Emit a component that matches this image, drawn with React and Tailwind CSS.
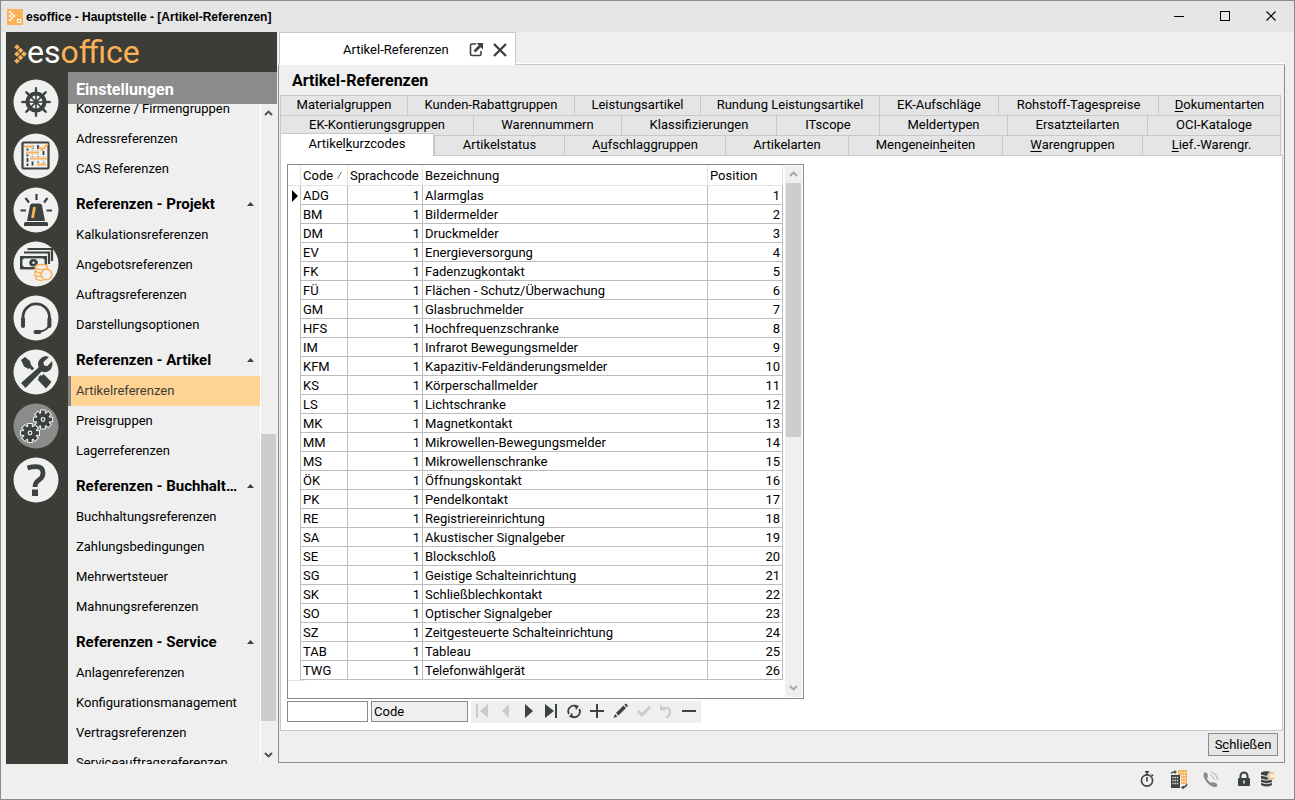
import React from "react";

const INK = "#3b4240";
const ORANGE = "#fbb256";

const sections = [
  { items: ["Konzerne / Firmengruppen", "Adressreferenzen", "CAS Referenzen"] },
  {
    title: "Referenzen - Projekt",
    items: ["Kalkulationsreferenzen", "Angebotsreferenzen", "Auftragsreferenzen", "Darstellungsoptionen"],
  },
  { title: "Referenzen - Artikel", items: ["Artikelreferenzen", "Preisgruppen", "Lagerreferenzen"] },
  {
    title: "Referenzen - Buchhaltung",
    items: ["Buchhaltungsreferenzen", "Zahlungsbedingungen", "Mehrwertsteuer", "Mahnungsreferenzen"],
  },
  {
    title: "Referenzen - Service",
    items: ["Anlagenreferenzen", "Konfigurationsmanagement", "Vertragsreferenzen", "Serviceauftragsreferenzen"],
  },
];

const rows = [
  ["ADG", "Alarmglas"],
  ["BM", "Bildermelder"],
  ["DM", "Druckmelder"],
  ["EV", "Energieversorgung"],
  ["FK", "Fadenzugkontakt"],
  ["FÜ", "Flächen - Schutz/Überwachung"],
  ["GM", "Glasbruchmelder"],
  ["HFS", "Hochfrequenzschranke"],
  ["IM", "Infrarot Bewegungsmelder"],
  ["KFM", "Kapazitiv-Feldänderungsmelder"],
  ["KS", "Körperschallmelder"],
  ["LS", "Lichtschranke"],
  ["MK", "Magnetkontakt"],
  ["MM", "Mikrowellen-Bewegungsmelder"],
  ["MS", "Mikrowellenschranke"],
  ["ÖK", "Öffnungskontakt"],
  ["PK", "Pendelkontakt"],
  ["RE", "Registriereinrichtung"],
  ["SA", "Akustischer Signalgeber"],
  ["SE", "Blockschloß"],
  ["SG", "Geistige Schalteinrichtung"],
  ["SK", "Schließblechkontakt"],
  ["SO", "Optischer Signalgeber"],
  ["SZ", "Zeitgesteuerte Schalteinrichtung"],
  ["TAB", "Tableau"],
  ["TWG", "Telefonwählgerät"],
];

const tabRows = [
  {
    grid: "grid-cols-[127fr_167fr_126fr_179fr_119fr_160fr_122fr]",
    tabs: ["Materialgruppen", "Kunden-Rabattgruppen", "Leistungsartikel", "Rundung Leistungsartikel", "EK-Aufschläge", "Rohstoff-Tagespreise", "_Dokumentarten"],
  },
  {
    grid: "grid-cols-[193fr_148fr_155fr_103fr_128fr_140fr_133fr]",
    tabs: ["EK-Kontierungsgruppen", "Warennummern", "Klassifizierungen", "ITscope", "Meldertypen", "Ersatzteilarten", "OCI-Kataloge"],
  },
  {
    grid: "grid-cols-[154fr_130fr_161fr_123fr_154fr_140fr_138fr]",
    tabs: ["Artikel_kurzcodes", "Artikelstatus", "A_ufschlaggruppen", "Artikelarten", "Mengenein_heiten", "_Warengruppen", "_Lief.-Warengr."],
  },
];

function Mnemonic({ text }) {
  const i = text.indexOf("_");
  if (i < 0) return text;
  return (
    <>
      {text.slice(0, i)}
      <span className="underline underline-offset-2">{text[i + 1]}</span>
      {text.slice(i + 2)}
    </>
  );
}

function Chevron({ up, className }) {
  return (
    <svg width="9" height="6" viewBox="0 0 9 6" className={className} aria-hidden="true">
      <path d={up ? "M1 5L4.500 1.500L8 5" : "M1 1L4.500 4.500L8 1"} fill="none" stroke="currentColor" strokeWidth="1.900" />
    </svg>
  );
}

/* ---------- module rail drawings, 46x46 ---------- */

function HelmIcon() {
  const angles = [0, 45, 90, 135, 180, 225, 270, 315];
  return (
    <g stroke={INK} fill="none">
      <circle cx="23" cy="23" r="8.500" strokeWidth="4" />
      {angles.map((a) => (
        <g key={a} transform={`rotate(${a} 23 23)`}>
          <path d="M23 21V8" strokeWidth="1.600" />
          <path d="M23 13V9.500" strokeWidth="2.400" />
        </g>
      ))}
      <circle cx="23" cy="23" r="2" fill={INK} />
    </g>
  );
}

function PlanIcon() {
  return (
    <g fill="none">
      <rect x="9.500" y="9.500" width="26" height="26" rx="1" stroke={INK} strokeWidth="2.200" />
      <path d="M14.500 14V33M19.500 12V33M25 12V33M30.500 18V33" stroke={INK} strokeWidth="1.800" strokeDasharray="4 1.500" />
      <path d="M11 13.500H20M14 19.500H26M17 25.500H34M24 31.500H33" stroke="#f0f0f0" strokeWidth="4" />
      <path d="M11 13.500H20M14 19.500H26M17 25.500H34M24 31.500H33" stroke={ORANGE} strokeWidth="2.200" />
      <path d="M26 14L29 17L35 11" stroke={ORANGE} strokeWidth="2" />
    </g>
  );
}

function AlarmIcon() {
  return (
    <g>
      <path d="M14 34L17 18.500Q17.500 16.500 19.500 16.500H26.500Q28.500 16.500 29 18.500L32 34Z" fill={INK} />
      <path d="M11 39V36.500Q11 35 12.500 35H33.500Q35 35 35 36.500V39Z" fill={INK} />
      <path d="M21.500 20L19.500 31" stroke={ORANGE} strokeWidth="2.800" />
      <path d="M23.500 7V13M12.500 11L16 15.500M34.500 11L31 15.500M7.500 23.500H13M33.500 23.500H39" stroke={INK} strokeWidth="2.200" />
    </g>
  );
}

function MoneyIcon() {
  return (
    <g fill="none">
      <path d="M14.500 8H39V20M11 11.500H36V23" stroke={INK} strokeWidth="2.200" />
      <rect x="8.200" y="16.200" width="24.600" height="11" fill="#f0f0f0" stroke={INK} strokeWidth="2.400" />
      <path d="M8 16H12L8 19ZM33 16H29L33 19ZM8 27H12L8 24ZM33 27H29L33 24Z" fill={INK} stroke={INK} />
      <ellipse cx="20.500" cy="21.700" rx="4.300" ry="3.800" fill={INK} />
      <circle cx="20.500" cy="21.700" r="1.200" fill="#f0f0f0" />
      <path d="M22 25Q28 21 36 26V39Q28 43 22 38L21 33Z" fill="#f0f0f0" />
      <ellipse cx="28.500" cy="26" rx="6" ry="2.500" stroke={ORANGE} strokeWidth="1.500" />
      <path d="M22.500 27V30Q25 32.500 29 32M22 30.500V34Q25 36 28 35.500M23 34.500V38Q26 40 30 39.500M34.500 27V29" stroke={ORANGE} strokeWidth="1.500" />
      <circle cx="33.500" cy="33.500" r="5.300" fill="#f0f0f0" stroke={ORANGE} strokeWidth="1.600" />
    </g>
  );
}

function HeadsetIcon() {
  return (
    <g fill="none" stroke={INK}>
      <path d="M10 25V22A13.200 13.200 0 0 1 36.400 22V25" strokeWidth="2.800" />
      <path d="M10 24V31M36.400 24V31" strokeWidth="4" strokeLinecap="round" />
      <path d="M36.500 29Q34.500 36 26 36.500" strokeWidth="1.800" />
      <path d="M22.500 37H26.500" strokeWidth="4" strokeLinecap="round" />
    </g>
  );
}

function ToolsIcon() {
  return (
    <g>
      <path d="M13 13L33 34" stroke={INK} strokeWidth="3" />
      <path d="M8 11L12 8L17 12L18.500 17.500L15.500 20L11 17.500Z" fill={INK} />
      <path d="M24.500 30.500L30.500 25L38.500 33L33 39.500Z" fill={INK} />
      <path d="M11.500 35.500L30 17" stroke="#f0f0f0" strokeWidth="9" />
      <path d="M8 34L25.500 18.500Q23.500 12 29 8.500Q32.500 6.500 36 8L30.500 13L31 16.500L34.500 17L39 12Q40.500 18 36.500 21.500Q33 24.500 28.500 22.500L12.500 39Z" fill={INK} />
    </g>
  );
}

function GearShape({ cx, cy, r }) {
  return (
    <g transform={`translate(${cx} ${cy})`}>
      {[false, true].map((front) => (
        <g key={String(front)} fill={front ? INK : "#f0f0f0"} stroke={front ? "none" : "#f0f0f0"} strokeWidth="2">
          <circle r={r} />
          {[0, 45, 90, 135, 180, 225, 270, 315].map((a) => (
            <rect key={a} x="-1.800" y={-r - 2.500} width="3.600" height="4" transform={`rotate(${a})`} />
          ))}
        </g>
      ))}
      <circle r="1.800" fill={INK} stroke="#f0f0f0" strokeWidth="1.200" />
    </g>
  );
}

function GearsIcon() {
  return (
    <g>
      <GearShape cx={30} cy={16.500} r={6.500} />
      <GearShape cx={17} cy={30} r={6.500} />
    </g>
  );
}

function HelpIcon() {
  return (
    <g>
      <path d="M14.500 11Q19 9.700 23 9.700Q30 9.700 30 16Q30 20 26.500 22.500Q22 25.500 22 30" fill="none" stroke={INK} strokeWidth="4.800" />
      <rect x="19" y="32.500" width="6" height="6.500" fill={INK} />
    </g>
  );
}

const modules = [
  ["Cockpit", HelmIcon],
  ["Planung", PlanIcon],
  ["Alarm", AlarmIcon],
  ["Finanzen", MoneyIcon],
  ["Service", HeadsetIcon],
  ["Werkzeuge", ToolsIcon],
  ["Einstellungen", GearsIcon],
  ["Hilfe", HelpIcon],
];

function Rail() {
  return (
    <nav aria-label="Module" className="flex w-[62px] shrink-0 flex-col items-center gap-2 bg-[#3d3d37] pt-[7px] pr-[2px]">
      {modules.map(([label, Icon]) => (
        <button key={label} aria-label={label} className="h-[46px] w-[46px] shrink-0">
          <svg viewBox="0 0 46 46" className="h-full w-full">
            <circle cx="23" cy="23" r="22.500" fill={label === "Einstellungen" ? "#8b8b8b" : "#f0f0f0"} />
            <Icon />
          </svg>
        </button>
      ))}
    </nav>
  );
}

function Logo() {
  const dots = [[3, 3], [6.5, 6.500], [3, 10], [10, 10], [6.500, 13.500], [3, 17]];
  return (
    <div className="flex h-10 shrink-0 items-center bg-[#3d3d37] pl-2">
      <svg width="13" height="20" viewBox="0 0 13 20" className="mt-1" aria-hidden="true">
        {dots.map(([x, y]) => (
          <rect key={`${x}-${y}`} x={x - 2} y={y - 2} width="4" height="4" fill={ORANGE} transform={`rotate(45 ${x} ${y})`} />
        ))}
      </svg>
      <span className="text-[32px] leading-8 text-white">
        es<span className="text-[#fbb256]">office</span>
      </span>
    </div>
  );
}

function Sidebar() {
  return (
    <aside className="flex w-[271px] shrink-0 flex-col">
      <Logo />
      <div className="flex min-h-0 flex-1">
        <Rail />
        <div className="flex min-w-0 flex-1 flex-col">
          <h2 className="h-8 shrink-0 bg-[#8b8b8b] pl-2 text-[16px] leading-9 font-bold text-white">Einstellungen</h2>
          <div className="flex min-h-0 flex-1">
            <div className="min-w-0 flex-1 overflow-hidden">
              <div className="-mt-[10px]">
                {sections.map((s) => (
                  <section key={s.title || "top"}>
                    {s.title && (
                      <h3 className="flex h-9 items-center gap-2 pt-1 pr-[6px] pl-2 text-[15px] font-bold">
                        <span className="min-w-0 flex-1 truncate">{s.title}</span>
                        <svg width="7" height="4" viewBox="0 0 7 4" aria-hidden="true">
                          <path d="M0 4L3.500 0L7 4Z" fill={INK} />
                        </svg>
                      </h3>
                    )}
                    {s.items.map((it) => (
                      <a
                        key={it}
                        href="#"
                        className={
                          it === "Artikelreferenzen"
                            ? "block h-[30px] border-l-[3px] border-[#8b8b8b] bg-[#ffd393] pl-[5px] leading-[30px] text-[#3d3d37]"
                            : "block h-[30px] pl-2 leading-[30px]"
                        }
                      >
                        {it}
                      </a>
                    ))}
                  </section>
                ))}
              </div>
            </div>
            <div className="flex w-[17px] shrink-0 flex-col items-center border-l border-white pr-[1px] text-[#505050]">
              <Chevron up className="my-[6px] shrink-0" />
              <div className="w-full flex-[312]" />
              <div className="w-[15px] flex-[287] bg-[#cdcdcd]" />
              <div className="w-full flex-[25]" />
              <Chevron className="my-[6px] shrink-0" />
            </div>
          </div>
        </div>
      </div>
    </aside>
  );
}

function TabStrip() {
  return (
    <div role="tablist" className="pr-[3px]">
      {tabRows.map((row) => (
        <div key={row.grid} className={`grid h-5 border-r border-[#c8c8c8] ${row.grid}`}>
          {row.tabs.map((t) => {
            const active = t === "Artikel_kurzcodes";
            return (
              <button
                key={t}
                role="tab"
                aria-selected={active}
                className={
                  active
                    ? "relative -mt-[2px] h-[23px] border border-b-0 border-[#c8c8c8] bg-white pb-[2px] leading-5"
                    : "border-t border-l border-[#c8c8c8] bg-[#e5e5e5] pb-[2px] leading-4 whitespace-nowrap"
                }
              >
                <Mnemonic text={t} />
              </button>
            );
          })}
        </div>
      ))}
    </div>
  );
}

function DataGrid() {
  const head = "border-r border-b border-[#e2e2e2] px-[2px] pt-[2px] pb-[1px] text-left font-normal";
  const cell = "border-r border-b border-[#bdbdbd] px-[2px] pt-[2px] pb-0";
  return (
    <div className="flex h-[535px] w-[517px] border border-[#8a8a8a] bg-white">
      <div className="min-w-0 flex-1">
        <table className="w-[495px] table-fixed border-separate border-spacing-0">
          <colgroup>
            <col className="w-[13px]" />
            <col className="w-[47px]" />
            <col className="w-[75px]" />
            <col className="w-[285px]" />
            <col className="w-[75px]" />
          </colgroup>
          <thead>
            <tr className="h-[21px] leading-[17px]">
              <th className={head} aria-label="Zeiger" />
              <th className={head}>
                <span className="flex items-center gap-1">
                  Code
                  <svg width="5" height="7" viewBox="0 0 5 7" aria-hidden="true">
                    <path d="M0.500 7L4.500 0" stroke="#777" fill="none" />
                  </svg>
                </span>
              </th>
              <th className={head}>Sprachcode</th>
              <th className={head}>Bezeichnung</th>
              <th className={head}>Position</th>
            </tr>
          </thead>
          <tbody>
            {rows.map(([code, name], i) => (
              <tr key={code} className="h-[19px] leading-4">
                <td className="border-r border-[#bdbdbd] p-0">
                  {i === 0 && (
                    <svg width="6" height="12" viewBox="0 0 6 12" className="ml-1" aria-label="Aktuelle Zeile">
                      <path d="M0 0L6 6L0 12Z" fill="#000" />
                    </svg>
                  )}
                </td>
                <td className={cell}>{code}</td>
                <td className={`${cell} text-right`}>1</td>
                <td className={cell}>{name}</td>
                <td className={`${cell} text-right`}>{i + 1}</td>
              </tr>
            ))}
          </tbody>
        </table>
        <div className="w-[17px] border-t border-[#e2e2e2]" />
      </div>
      <div className="my-[1px] mr-[1px] flex w-[17px] shrink-0 flex-col items-center bg-[#efefef] text-[#a5a5a5]">
        <Chevron up className="mt-[5px] mb-[6px] shrink-0" />
        <div className="w-[15px] flex-[254] bg-[#cdcdcd]" />
        <div className="w-full flex-[242]" />
        <Chevron className="my-[6px] shrink-0" />
      </div>
    </div>
  );
}

const navButtons = [
  ["Erster", true, <g fill="currentColor"><rect x="5" y="5" width="2" height="14" /><path d="M17 5V19L9 12Z" /></g>],
  ["Voriger", true, <path d="M15 5V19L8 12Z" fill="currentColor" />],
  ["Nächster", false, <path d="M8 5V19L16 12Z" fill="currentColor" />],
  ["Letzter", false, <g fill="currentColor"><path d="M5 5V19L14 12Z" /><rect x="15" y="5" width="2" height="14" /></g>],
  [
    "Aktualisieren",
    false,
    <g fill="none" stroke="currentColor" strokeWidth="1.800">
      <path d="M6 15A5.500 5.500 0 0 1 13.500 7.500" />
      <path d="M16.200 10A5.500 5.500 0 0 1 8.500 17.300" />
      <path d="M11.500 5.500L16 7L13 11ZM10.500 19.300L6 17.800L9 13.800Z" fill="currentColor" stroke="none" />
    </g>,
  ],
  ["Einfügen", false, <path d="M11 5V19M4 12H18" stroke="currentColor" strokeWidth="2" />],
  [
    "Bearbeiten",
    false,
    <g fill="currentColor">
      <path d="M4.500 19L6 15L8.500 17.500Z" />
      <path d="M7 14L14.500 6.500L17 9L9.500 16.500Z" />
      <path d="M15.300 5.700L17 4.500L19 6.500L17.800 8.200Z" />
    </g>,
  ],
  ["Speichern", true, <path d="M6 12L10 16L18 8" fill="none" stroke="currentColor" strokeWidth="3" />],
  [
    "Rückgängig",
    true,
    <g fill="none" stroke="currentColor" strokeWidth="2.200">
      <path d="M7 9H12A4 4 0 0 1 15 13Q15 17 11 18.500" />
      <path d="M5 5V11.500H11Z" fill="currentColor" stroke="none" />
    </g>,
  ],
  ["Löschen", false, <path d="M4 12H18" stroke="currentColor" strokeWidth="2" />],
];

function RecordBar() {
  return (
    <div className="mt-[2px] flex items-start gap-[3px]">
      <input aria-label="Suche" className="h-[21px] w-[81px] border border-[#8a8a8a] bg-white px-1 outline-none" />
      <input
        aria-label="Suchfeld"
        readOnly
        value="Code"
        className="h-[21px] w-[97px] border border-[#8a8a8a] bg-[#efefef] px-[2px] outline-none"
      />
      <div className="flex bg-[#efefef]">
        {navButtons.map(([label, off, art]) => (
          <button key={label} aria-label={label} disabled={off} className={off ? "h-[22px] w-[23px] text-[#cbcbcb]" : "h-[22px] w-[23px] text-[#3b4240]"}>
            <svg width="23" height="22" viewBox="0 2 23 22">{art}</svg>
          </button>
        ))}
      </div>
    </div>
  );
}

function Workspace() {
  return (
    <main className="mb-px flex min-w-0 flex-1 flex-col">
      <div className="flex h-[33px] shrink-0">
        <div className="ml-px flex w-[237px] items-center border border-b-0 border-[#c8c8c8] bg-white pt-[1px] pl-[63px]">
          <button className="whitespace-nowrap">Artikel-Referenzen</button>
          <button aria-label="In neuem Fenster öffnen" className="ml-5">
            <svg width="15" height="15" viewBox="0 0 15 15" fill="none">
              <path d="M7 2H3Q1.500 2 1.500 3.500V12Q1.500 13.500 3 13.500H10.500Q12 13.500 12 12V9" stroke={INK} strokeWidth="1.600" />
              <path d="M5.500 9.500L11 4" stroke={INK} strokeWidth="2.600" />
              <path d="M7.500 1H14V7.500Z" fill={INK} />
            </svg>
          </button>
          <button aria-label="Schließen" className="ml-2">
            <svg width="16" height="16" viewBox="0 0 16 16">
              <path d="M2 2L14 14M14 2L2 14" stroke={INK} strokeWidth="2.400" />
            </svg>
          </button>
        </div>
        <div className="flex flex-1 border-b border-[#c8c8c8]">
          <div className="flex-1 border-b border-white" />
        </div>
      </div>
      <section className="flex min-h-0 flex-1 flex-col border-r border-b border-l border-[#8a8a8a] pl-[1px]">
        <h1 className="h-[30px] shrink-0 pl-[12px] text-[16px] leading-8 font-bold">Artikel-Referenzen</h1>
        <TabStrip />
        <div className="mr-[1px] min-h-0 flex-1 border border-[#c8c8c8] bg-white pt-2 pl-[6px]">
          <DataGrid />
          <RecordBar />
        </div>
        <div className="flex h-[31px] shrink-0 items-start justify-end pt-[2px] pr-[6px]">
          <button className="h-[23px] w-[70px] border border-[#8a8a8a] bg-[#e5e5e5] leading-5">
            <Mnemonic text="S_chließen" />
          </button>
        </div>
      </section>
    </main>
  );
}

function TitleBar() {
  return (
    <header className="flex h-[31px] shrink-0 items-center bg-[#e5e5e5] pl-[6px]">
      <svg width="16" height="16" viewBox="0 0 16 16" aria-hidden="true">
        <rect width="16" height="16" fill={ORANGE} />
        <path d="M2 2H4V4H2ZM4 4H6V6H4ZM6 6H8V8H6ZM2 6H4V8H2ZM4 8H6V10H4ZM2 10H4V12H2Z" fill="#fff" />
        <rect x="10.500" y="10.500" width="3" height="3" fill="none" stroke="#fff" />
      </svg>
      <h1 className="ml-[3px] flex-1 font-['Liberation_Sans',sans-serif] text-[12px] font-bold">esoffice - Hauptstelle - [Artikel-Referenzen]</h1>
      <div className="flex">
        <button aria-label="Minimieren" className="flex h-[30px] w-[46px] items-center justify-center">
          <svg width="11" height="11"><path d="M0 5.500H10" stroke="#000" /></svg>
        </button>
        <button aria-label="Maximieren" className="flex h-[30px] w-[46px] items-center justify-center">
          <svg width="11" height="11"><rect x="0.500" y="0.500" width="9" height="9" fill="none" stroke="#000" /></svg>
        </button>
        <button aria-label="Fenster schließen" className="flex h-[30px] w-[46px] items-center justify-center">
          <svg width="11" height="11"><path d="M0.500 0.500L9.500 9.500M9.500 0.500L0.500 9.500" stroke="#000" strokeWidth="1.200" /></svg>
        </button>
      </div>
    </header>
  );
}

function StatusBar() {
  return (
    <footer className="flex h-[35px] shrink-0 items-start justify-end gap-[13px] pt-[6px] pr-[18px]">
      <svg width="18" height="18" viewBox="0 0 18 18" fill="none" stroke={INK} aria-label="Zeiterfassung">
        <circle cx="9" cy="10.500" r="5.600" strokeWidth="1.600" />
        <path d="M9 7V11.500M7 1.800H11M9 2V5M13.500 4.500L15 6" strokeWidth="1.600" />
      </svg>
      <svg width="20" height="20" viewBox="0 0 20 20" aria-label="Mandant">
        <path d="M9 0H18V14H12V5H9Z" fill={ORANGE} />
        <path d="M10.500 2.500H17M13 5.500H17M13 8.500H17M13 11.500H17" stroke="#efefef" strokeWidth="1.400" strokeDasharray="1.300 0.900" />
        <rect x="2" y="5" width="9" height="13" fill={INK} />
        <path d="M3.400 7.500H10M3.400 10.500H10M3.400 13.500H10" stroke="#efefef" strokeWidth="1.400" strokeDasharray="1.300 0.900" />
        <path d="M2 3.500Q3 2 6 1.800M13 17.500Q17 17.500 18 14" fill="none" stroke={INK} strokeWidth="1.300" />
        <path d="M5.500 0L8 2L5.500 4ZM14.500 15.500L12 17.500L14.500 19.500Z" fill={INK} />
      </svg>
      <svg width="18" height="18" viewBox="0 0 18 18" aria-label="Telefon">
        <path d="M3 2L5.500 3.500L6 7L4.800 8Q6 11.500 9.500 13L11 12L14.500 13.500L15.500 15.500Q14 18 10.500 16.500Q3.500 13.500 1.500 6Q1.200 3 3 2Z" fill="#8b8b8b" />
        <path d="M8 5Q11.500 6 12 10M9 2Q15 3.500 15.500 10" fill="none" stroke="#c4c4c4" strokeWidth="1.300" />
      </svg>
      <div className="flex gap-[5px] pl-[2px]">
        <svg width="18" height="18" viewBox="0 0 18 18" aria-label="Gesperrt">
          <path d="M5.500 9V6A3.500 3.500 0 0 1 12.500 6V9" fill="none" stroke={INK} strokeWidth="2" />
          <rect x="3" y="8" width="12" height="8" rx="1" fill={INK} />
          <path d="M9 10.500V13.500" stroke="#efefef" strokeWidth="1.500" />
        </svg>
        <svg width="18" height="18" viewBox="0 0 18 18" aria-label="Datenbank">
          <path d="M3 2.500Q8.500 0 14 2.500V15Q8.500 18 3 15Z" fill={INK} />
          <path d="M2.500 5.200Q8.500 7.500 14.500 5.200M2.500 9Q8.500 11.500 14.500 9M2.500 12.500Q8.500 15 14.500 12.500" fill="none" stroke="#efefef" />
          <circle cx="13.500" cy="6" r="4.300" fill="#efefef" />
          <path d="M16 4A3 3 0 1 0 16.300 7.500" fill="none" stroke={ORANGE} strokeWidth="1.400" />
        </svg>
      </div>
    </footer>
  );
}

export default function App() {
  return (
    <div className="flex h-screen flex-col overflow-hidden border border-[#8a8a8a] bg-[#efefef] font-[Roboto,sans-serif] text-[13px] text-black">
      <TitleBar />
      <div className="flex min-h-0 flex-1 pr-[9px] pl-[5px]">
        <Sidebar />
        <div className="w-px shrink-0" />
        <Workspace />
      </div>
      <StatusBar />
    </div>
  );
}
